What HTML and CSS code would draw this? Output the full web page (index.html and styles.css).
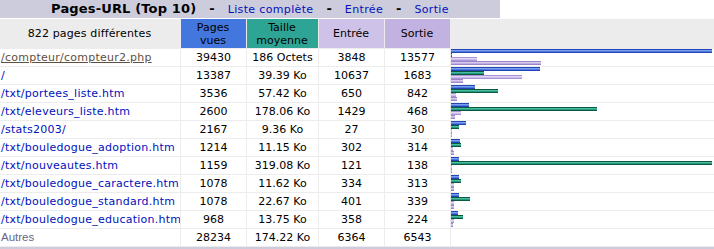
FILE: index.html
```html
<!DOCTYPE html>
<html lang="fr">
<head>
<meta charset="utf-8">
<title>Pages-URL</title>
<link rel="stylesheet" href="styles.css">
</head>
<body>
<div class="frame">
  <div class="titlebar">
    <div class="title"><b>Pages-URL (Top 10)</b><span class="sep">-</span><a href="#">Liste complète</a><span class="sep">-</span><a href="#">Entrée</a><span class="sep">-</span><a href="#">Sortie</a></div>
    <div class="blank"></div>
  </div>
  <table class="data">
    <thead>
      <tr class="head">
        <th class="c-url">822 pages différentes</th>
        <th class="c-p">Pages<br>vues</th>
        <th class="c-k">Taille<br>moyenne</th>
        <th class="c-e">Entrée</th>
        <th class="c-x">Sortie</th>
        <th class="c-bar"></th>
      </tr>
    </thead>
    <tbody>
      <tr><td class="url"><a class="hover" href="#">/compteur/compteur2.php</a></td><td>39430</td><td>186 Octets</td><td>3848</td><td>13577</td>
        <td class="bars"><div class="bar bp" style="width:261px"></div><div class="bar bk" style="width:1px"></div><div class="bar be" style="width:26px"></div><div class="bar bx" style="width:90px"></div></td></tr>
      <tr><td class="url"><a href="#">/</a></td><td>13387</td><td>39.39 Ko</td><td>10637</td><td>1683</td>
        <td class="bars"><div class="bar bp" style="width:89px"></div><div class="bar bk" style="width:33px"></div><div class="bar be" style="width:71px"></div><div class="bar bx" style="width:12px"></div></td></tr>
      <tr><td class="url"><a href="#">/txt/portees_liste.htm</a></td><td>3536</td><td>57.42 Ko</td><td>650</td><td>842</td>
        <td class="bars"><div class="bar bp" style="width:24px"></div><div class="bar bk" style="width:47px"></div><div class="bar be" style="width:5px"></div><div class="bar bx" style="width:6px"></div></td></tr>
      <tr><td class="url"><a href="#">/txt/eleveurs_liste.htm</a></td><td>2600</td><td>178.06 Ko</td><td>1429</td><td>468</td>
        <td class="bars"><div class="bar bp" style="width:18px"></div><div class="bar bk" style="width:146px"></div><div class="bar be" style="width:10px"></div><div class="bar bx" style="width:4px"></div></td></tr>
      <tr><td class="url"><a href="#">/stats2003/</a></td><td>2167</td><td>9.36 Ko</td><td>27</td><td>30</td>
        <td class="bars"><div class="bar bp" style="width:15px"></div><div class="bar bk" style="width:8px"></div><div class="bar be" style="width:1px"></div><div class="bar bx" style="width:1px"></div></td></tr>
      <tr><td class="url"><a href="#">/txt/bouledogue_adoption.htm</a></td><td>1214</td><td>11.15 Ko</td><td>302</td><td>314</td>
        <td class="bars"><div class="bar bp" style="width:9px"></div><div class="bar bk" style="width:10px"></div><div class="bar be" style="width:2px"></div><div class="bar bx" style="width:3px"></div></td></tr>
      <tr><td class="url"><a href="#">/txt/nouveautes.htm</a></td><td>1159</td><td>319.08 Ko</td><td>121</td><td>138</td>
        <td class="bars"><div class="bar bp" style="width:8px"></div><div class="bar bk" style="width:261px"></div><div class="bar be" style="width:1px"></div><div class="bar bx" style="width:1px"></div></td></tr>
      <tr><td class="url"><a href="#">/txt/bouledogue_caractere.htm</a></td><td>1078</td><td>11.62 Ko</td><td>334</td><td>313</td>
        <td class="bars"><div class="bar bp" style="width:8px"></div><div class="bar bk" style="width:10px"></div><div class="bar be" style="width:3px"></div><div class="bar bx" style="width:3px"></div></td></tr>
      <tr><td class="url"><a href="#">/txt/bouledogue_standard.htm</a></td><td>1078</td><td>22.67 Ko</td><td>401</td><td>339</td>
        <td class="bars"><div class="bar bp" style="width:8px"></div><div class="bar bk" style="width:19px"></div><div class="bar be" style="width:3px"></div><div class="bar bx" style="width:3px"></div></td></tr>
      <tr><td class="url"><a href="#">/txt/bouledogue_education.htm</a></td><td>968</td><td>13.75 Ko</td><td>358</td><td>224</td>
        <td class="bars"><div class="bar bp" style="width:7px"></div><div class="bar bk" style="width:12px"></div><div class="bar be" style="width:3px"></div><div class="bar bx" style="width:2px"></div></td></tr>
      <tr><td class="url"><span class="other">Autres</span></td><td>28234</td><td>174.22 Ko</td><td>6364</td><td>6543</td><td class="bars"></td></tr>
    </tbody>
  </table>
</div>
</body>
</html>
```
FILE: styles.css
```css
html, body {
  margin: 0;
  padding: 0;
  background: #ffffff;
}

body {
  font-family: "DejaVu Sans", Verdana, sans-serif;
  font-size: 11px;
  color: #000;
}

.frame {
  width: 714px;
  background: #ccccdd;
  padding-bottom: 3px;
}

.titlebar {
  display: flex;
  height: 18px;
}

.title {
  width: 500px;
  background: #ccccdd;
  text-align: center;
  font-size: 13px;
  line-height: 17px;
  white-space: nowrap;
}

.title b {
  font-weight: bold;
  letter-spacing: 0.15px;
}

.title a {
  font-size: 11px;
  letter-spacing: 0.35px;
}

.sep {
  display: inline-block;
  padding: 0 13px;
  font-weight: bold;
  font-size: 13px;
}

.blank {
  flex: 1;
  background: #ffffff;
}

a {
  color: #0011bb;
  text-decoration: none;
}

a.hover {
  color: #605040;
  text-decoration: underline;
}

.data {
  width: 714px;
  table-layout: fixed;
  border-collapse: separate;
  border-spacing: 0;
  background: #ffffff;
  border-top: 1px solid #ffffff;
}

.data th,
.data td {
  box-sizing: border-box;
  border-right: 1px solid #ececec;
  border-bottom: 1px solid #ececec;
  padding: 0;
  text-align: center;
  font-weight: normal;
  font-size: 11px;
  white-space: nowrap;
  overflow: hidden;
}

.head th {
  height: 30px;
  line-height: 13px;
  background: #ececec;
  vertical-align: middle;
  padding: 1px 2px 1px 1px;
}

.head .c-url { width: 181px; letter-spacing: 0.15px; }
.head .c-p { width: 66px; background: #4477dd; }
.head .c-k { width: 72px; background: #2ea495; }
.head .c-e { width: 66px; background: #cec2e8; }
.head .c-x { width: 66px; background: #c1b2e2; }
.head .c-bar { width: 263px; border-right: 0; }

.data tbody td {
  height: 18px;
  line-height: 17px;
}

.data td.url {
  text-align: left;
  padding-left: 1px;
  letter-spacing: 0.25px;
}

.other {
  color: #666688;
  font-family: "Liberation Sans", Arial, sans-serif;
  font-size: 11.5px;
  letter-spacing: 0;
}

.data td.bars {
  vertical-align: top;
  padding: 0;
  border-right: 0;
}

.bar {
  height: 4px;
}

.bp {
  background: linear-gradient(#2446b4 0 1px, #7c9ef0 1px 2px, #4f7ae2 2px 3px, #2446b4 3px);
}

.bk {
  background: linear-gradient(#0a5a42 0 1px, #49bd9f 1px 2px, #2a9a7f 2px 3px, #0a5a42 3px);
}

.be {
  background: linear-gradient(#a894d6 0 1px, #e0d6f4 1px 2px, #cbbcec 2px 3px, #a894d6 3px);
}

.bx {
  background: linear-gradient(#9c86c8 0 1px, #d6cbee 1px 2px, #bfaee2 2px 3px, #9c86c8 3px);
}
```
